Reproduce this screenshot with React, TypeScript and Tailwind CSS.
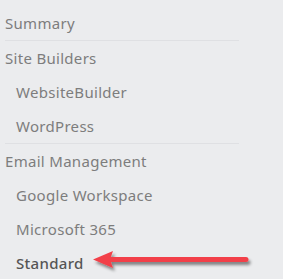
import React from 'react';

interface NavItem {
  label: string;
  sub?: boolean;
  active?: boolean;
  divider?: boolean;
}

const items: NavItem[] = [
  { label: 'Summary', divider: true },
  { label: 'Site Builders' },
  { label: 'WebsiteBuilder', sub: true },
  { label: 'WordPress', sub: true, divider: true },
  { label: 'Email Management' },
  { label: 'Google Workspace', sub: true },
  { label: 'Microsoft 365', sub: true },
  { label: 'Standard', sub: true, active: true },
];

export default function App() {
  return (
    <div
      className="relative w-[283px] h-[279px] overflow-hidden bg-[#ebecee] pt-[6px] pl-[5px]"
      style={{ fontFamily: '"Noto Sans", sans-serif' }}
    >
      <ul className="w-[234px]">
        {items.map((item) => (
          <li
            key={item.label}
            className={`py-[7px] text-[15px] leading-[20px] tracking-[0.3px] whitespace-nowrap ${
              item.sub ? 'pl-[11px]' : ''
            } ${item.divider ? 'border-b border-[#dfe0e3]' : ''} ${
              item.active ? 'text-[#555] font-medium' : 'text-[#7d7d7d]'
            }`}
          >
            {item.label}
          </li>
        ))}
      </ul>

      {/* red arrow pointing at the active item */}
      <svg
        className="absolute left-0 top-0"
        width="283"
        height="279"
        viewBox="0 0 283 279"
      >
        <defs>
          <filter id="shadow" x="-10%" y="-50%" width="120%" height="200%">
            <feDropShadow dx="2" dy="3" stdDeviation="1.5" floodColor="#000" floodOpacity="0.45" />
          </filter>
        </defs>
        <g filter="url(#shadow)">
          <line x1="108" y1="259.5" x2="246" y2="259.5" stroke="#f2404a" strokeWidth="5" strokeLinecap="round" />
          <polygon points="93,259.5 113,251 110,259.5 113,268" fill="#f2404a" />
        </g>
      </svg>
    </div>
  );
}
